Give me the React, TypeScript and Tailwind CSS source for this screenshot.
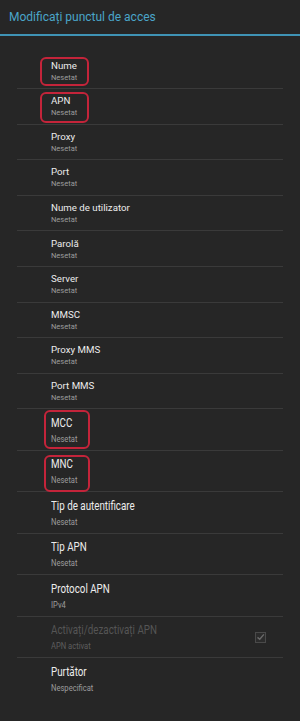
const topRows = [
  { title: 'Nume', sub: 'Nesetat', mark: 'left-[23px] top-[3.5px] w-[49px] h-[29px]' },
  { title: 'APN', sub: 'Nesetat', mark: 'left-[23px] top-[3px] w-[49px] h-[31px]' },
  { title: 'Proxy', sub: 'Nesetat' },
  { title: 'Port', sub: 'Nesetat' },
  { title: 'Nume de utilizator', sub: 'Nesetat' },
  { title: 'Parolă', sub: 'Nesetat' },
  { title: 'Server', sub: 'Nesetat' },
  { title: 'MMSC', sub: 'Nesetat' },
  { title: 'Proxy MMS', sub: 'Nesetat' },
  { title: 'Port MMS', sub: 'Nesetat' },
]

const bottomRows = [
  { title: 'MCC', sub: 'Nesetat', mark: 'left-[27px] top-[0.5px] w-[46px] h-[39.5px]' },
  { title: 'MNC', sub: 'Nesetat', mark: 'left-[27px] top-[4px] w-[46px] h-[37px]' },
  { title: 'Tip de autentificare', sub: 'Nesetat' },
  { title: 'Tip APN', sub: 'Nesetat' },
  { title: 'Protocol APN', sub: 'IPv4' },
  { title: 'Activați/dezactivați APN', sub: 'APN activat', disabled: true, check: true },
  { title: 'Purtător', sub: 'Nespecificat', last: true },
]

type Row = {
  title: string
  sub: string
  mark?: string
  disabled?: boolean
  check?: boolean
  last?: boolean
}

function Mark({ className }: { className: string }) {
  return (
    <div
      className={`absolute ${className} rounded-[6px] border-2 border-[#c4243a] pointer-events-none`}
    />
  )
}

function TopRow({ row }: { row: Row }) {
  return (
    <div className="relative h-[35.6px] border-b border-[#3a3a3a] flex flex-col justify-center pl-[34px]">
      <div className="text-[9.7px] leading-[12px] text-[#ececec]">{row.title}</div>
      <div className="text-[7.5px] leading-[9px] text-[#9c9c9c] mt-[1px]">{row.sub}</div>
      {row.mark && <Mark className={row.mark} />}
    </div>
  )
}

function BottomRow({ row }: { row: Row }) {
  return (
    <div
      className={`relative h-[41.5px] flex items-center pl-[34px] pr-[17px] ${
        row.last ? '' : 'border-b border-[#3a3a3a]'
      }`}
    >
      <div className="flex-1 flex flex-col scale-y-[1.3] origin-center">
        <div
          className={`text-[9.8px] leading-[11px] ${
            row.disabled ? 'text-[#555555]' : 'text-[#ececec]'
          }`}
        >
          {row.title}
        </div>
        <div
          className={`text-[7.6px] leading-[9px] mt-[1.5px] ${
            row.disabled ? 'text-[#5e5e5e]' : 'text-[#9c9c9c]'
          }`}
        >
          {row.sub}
        </div>
      </div>
      {row.check && (
        <div className="w-[11px] h-[11px] border border-[#4a4a4a] bg-[#2c2c2c] flex items-center justify-center">
          <svg viewBox="0 0 12 12" className="w-[10px] h-[10px]">
            <path d="M2 6.5 L5 9 L10.5 2.5" fill="none" stroke="#6a6a6a" strokeWidth="1.8" />
          </svg>
        </div>
      )}
      {row.mark && <Mark className={row.mark} />}
    </div>
  )
}

export default function App() {
  return (
    <div
      className="w-[300px] h-[721px] bg-[#262626] overflow-hidden"
      style={{ fontFamily: 'Roboto, "Noto Sans", sans-serif' }}
    >
      <div className="h-[34px] flex items-center pl-[9px]">
        <span className="text-[12px] text-[#4aa5c9]">Modificați punctul de acces</span>
      </div>
      <div className="h-[2px] bg-[#3f93b5]" />

      <div className="mx-[17px] pt-[17.4px]">
        {topRows.map((row) => (
          <TopRow key={row.title} row={row} />
        ))}
        {bottomRows.map((row) => (
          <BottomRow key={row.title} row={row} />
        ))}
      </div>
    </div>
  )
}
